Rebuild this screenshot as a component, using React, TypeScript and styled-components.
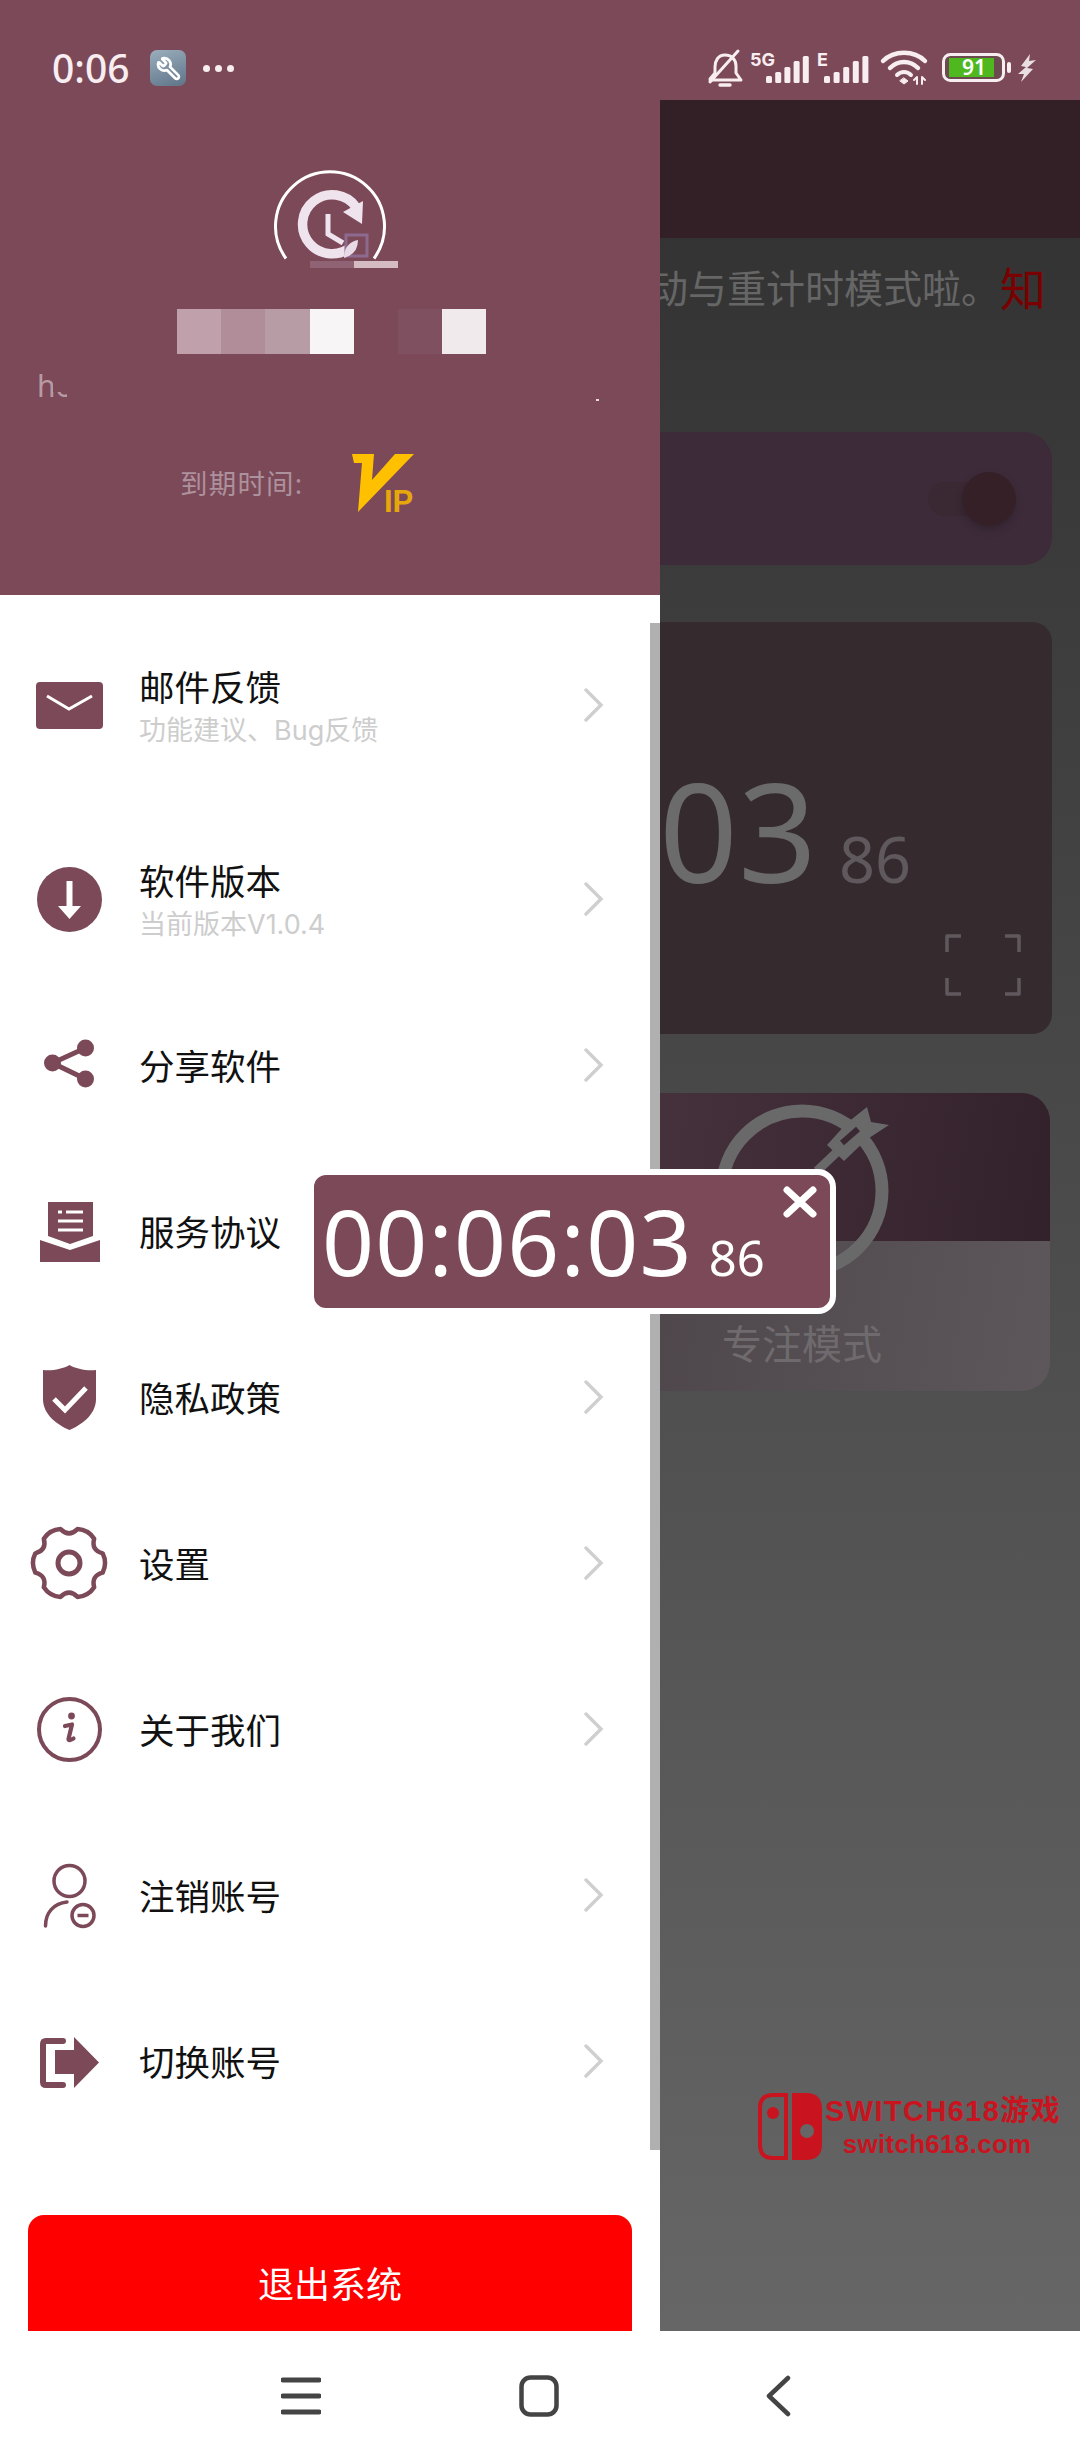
import React from "react";
import styled, { createGlobalStyle } from "styled-components";
import { Wrench } from "lucide-react";

const PLUM = "#7b4958";
const FONT = '"Noto Sans", "Noto Sans CJK SC", sans-serif';

const Global = createGlobalStyle`
  html, body { margin: 0; padding: 0; background: #fff; }
  * { box-sizing: border-box; }
  body { font-family: ${FONT}; }
`;

const Screen = styled.div`
  position: relative;
  width: 1080px;
  height: 2460px;
  display: flex;
  flex-direction: column;
  overflow: hidden;
  background: #fff;
`;

/* ---------- status bar ---------- */
const StatusBar = styled.div`
  height: 100px;
  flex: none;
  background: ${PLUM};
  display: flex;
  align-items: center;
  padding: 36px 44px 0 52px;
  color: #f8edf0;
`;
const Clock = styled.span`
  font-size: 39px;
  line-height: 44px;
  width: 98px;
  font-weight: 500;
`;
const ToolBadge = styled.span`
  width: 36px;
  height: 36px;
  border-radius: 7px;
  background: linear-gradient(160deg, #9aaebd, #5f7488);
  display: flex;
  align-items: center;
  justify-content: center;
  color: #fff;
`;
const FlippedWrench = styled(Wrench)`
  transform: scaleX(-1);
`;
const Dots = styled.span`
  display: flex;
  gap: 5px;
  margin-left: 17px;
`;
const Dot = styled.i`
  width: 7px;
  height: 7px;
  border-radius: 50%;
  background: #f8edf0;
`;
const StatusRight = styled.div`
  margin-left: auto;
  display: flex;
  align-items: center;
`;
const StatusIcon = styled.svg<{ $gap?: number }>`
  display: block;
  flex: none;
  overflow: visible;
  margin-left: ${(p) => p.$gap ?? 0}px;
`;
const SmallMark = styled.text`
  font-family: "Inter", "Noto Sans", sans-serif;
  font-weight: 700;
  font-size: 18px;
  fill: #f8edf0;
`;
const BatteryNum = styled.text`
  font-family: "Noto Sans", sans-serif;
  font-weight: 600;
  font-size: 21px;
  fill: #fff;
`;

/* ---------- body ---------- */
const Body = styled.div`
  flex: none;
  height: 2231px;
  display: flex;
  overflow: hidden;
  position: relative;
`;
const Drawer = styled.aside`
  position: relative;
  z-index: 2;
  width: 660px;
  flex: none;
  background: #fff;
  overflow: hidden;
`;
const Scrollbar = styled.div`
  position: absolute;
  right: 0;
  top: 523px;
  width: 10px;
  height: 1527px;
  background: #b0b0b0;
`;
const DrawerHead = styled.header`
  height: 495px;
  background: ${PLUM};
  padding-top: 70px;
  display: flex;
  flex-direction: column;
`;
const Logo = styled.svg`
  display: block;
  margin-left: 270px;
  flex: none;
`;
const Mosaic = styled.div`
  display: flex;
  margin: 39px 0 0 177px;
  height: 45px;
`;
const MosaicCell = styled.i<{ $c: string }>`
  width: 44.2px;
  background: ${(p) => p.$c};
`;
const MailRow = styled.div`
  position: relative;
  height: 36px;
  margin-top: 14px;
  padding-left: 37px;
`;
const MailFrag = styled.span`
  display: block;
  width: 30px;
  height: 36px;
  overflow: hidden;
  font-size: 30px;
  line-height: 36px;
  color: #b89aa4;
`;
const MailMask = styled.i`
  position: absolute;
  left: 53px;
  top: 0;
  width: 16px;
  height: 24px;
  background: ${PLUM};
`;
const MailTick = styled.i`
  position: absolute;
  left: 596px;
  top: 31px;
  width: 3px;
  height: 2px;
  background: #e7dbe0;
`;
const ExpiryRow = styled.div`
  display: flex;
  align-items: center;
  margin-top: 50px;
  padding-left: 180px;
  gap: 49px;
`;
const ExpiryLabel = styled.span`
  font-size: 27.5px;
  line-height: 40px;
  letter-spacing: 1.2px;
  color: #ad919c;
`;
const VipLogo = styled.svg`
  display: block;
  flex: none;
  overflow: visible;
`;
const VipText = styled.text`
  font-family: "Liberation Sans", sans-serif;
  font-weight: 700;
  font-size: 31px;
  fill: #e6a70c;
`;

const Menu = styled.nav`
  display: flex;
  flex-direction: column;
`;
const Row = styled.div<{ $first?: boolean }>`
  height: ${(p) => (p.$first ? 220.5 : 166)}px;
  flex: none;
  display: flex;
  align-items: center;
  padding-left: 29px;
`;
const IconBox = styled.svg`
  width: 80px;
  height: 80px;
  flex: none;
  display: block;
  overflow: visible;
`;
const RowText = styled.div<{ $shift: boolean }>`
  margin-left: 30px;
  width: 445px;
  display: flex;
  flex-direction: column;
  padding-top: ${(p) => (p.$shift ? 6 : 2)}px;
`;
const RowTitle = styled.div`
  font-size: 35.5px;
  line-height: 46px;
  color: #111;
`;
const RowSub = styled.div`
  font-family: "Inter", "Noto Sans CJK SC", sans-serif;
  font-size: 27px;
  line-height: 42px;
  color: #cdcdcd;
`;
const Chevron = styled.svg`
  flex: none;
  display: block;
`;
const Logout = styled.button`
  display: flex;
  align-items: flex-start;
  justify-content: center;
  width: 604px;
  height: 140px;
  margin: 71px 0 0 28px;
  padding: 46px 0 0;
  border: 0;
  border-radius: 16px;
  background: #fe0000;
  color: #fff;
  font-family: ${FONT};
  font-size: 36px;
  line-height: 48px;
`;

/* ---------- app behind the drawer ---------- */
const Pane = styled.main`
  flex: 1;
  min-width: 0;
  overflow: hidden;
  display: flex;
  flex-direction: column;
  background: linear-gradient(180deg, #303030 0%, #666 100%);
`;
const AppBar = styled.div`
  height: 138px;
  flex: none;
  background: #331f26;
`;
const Notice = styled.div`
  height: 194px;
  flex: none;
  display: flex;
  justify-content: flex-end;
  padding: 1px 34px 0 0;
  white-space: nowrap;
  font-size: 39px;
  line-height: 98px;
  color: #666;
`;
const NoticeLink = styled.span`
  font-size: 46px;
  color: #7a0000;
`;
const ModeCard = styled.section`
  flex: none;
  height: 133px;
  margin: 0 28px 57px -60px;
  border-radius: 0 28px 28px 0;
  background: #3d2b39;
  display: flex;
  align-items: center;
  justify-content: flex-end;
  padding-right: 36px;
`;
const SwitchTrack = styled.div`
  position: relative;
  width: 88px;
  height: 34px;
  border-radius: 17px;
  background: #3a2833;
`;
const SwitchThumb = styled.i`
  position: absolute;
  right: 0;
  top: -10px;
  width: 54px;
  height: 54px;
  border-radius: 50%;
  background: #352027;
  box-shadow: 0 4px 8px rgba(0, 0, 0, 0.18);
`;
const TimerCard = styled.section`
  flex: none;
  height: 412px;
  margin: 0 28px 59px -60px;
  border-radius: 0 20px 20px 0;
  background: #352b2f;
  padding-top: 137px;
  display: flex;
  flex-direction: column;
`;
const TimerRow = styled.div`
  display: flex;
  align-items: baseline;
  justify-content: flex-end;
  gap: 22px;
  padding-right: 141px;
  height: 140px;
`;
const BigDigits = styled.span`
  font-size: 138px;
  line-height: 140px;
  color: #6b6b6b;
`;
const MidDigits = styled.span`
  font-size: 63px;
  line-height: 64px;
  color: #5f595d;
`;
const FullIcon = styled.svg`
  display: block;
  align-self: flex-end;
  margin: 35px 31px 0 0;
`;
const FocusCard = styled.section`
  position: relative;
  flex: none;
  height: 298px;
  margin: 0 30px 0 -106px;
  border-radius: 28px;
  overflow: hidden;
  display: flex;
  flex-direction: column;
`;
const FocusTop = styled.div`
  height: 148px;
  background: linear-gradient(100deg, #4a3641, #32202a);
`;
const FocusBottom = styled.div`
  flex: 1;
  background: linear-gradient(100deg, #4a4246, #5d575b);
  display: flex;
  justify-content: center;
  font-size: 40px;
  line-height: 56px;
  padding-top: 75px;
  color: #6f6a6d;
`;
const TargetArt = styled.svg`
  position: absolute;
  left: 150px;
  top: 0;
  display: block;
`;

/* ---------- overlays ---------- */
const FloatTimer = styled.div`
  position: absolute;
  z-index: 5;
  left: 308px;
  top: 1169px;
  width: 528px;
  height: 145px;
  border: 6px solid #fff;
  border-radius: 18px;
  background: ${PLUM};
  display: flex;
  align-items: baseline;
  padding-left: 8px;
  color: #fff;
`;
const FloatBig = styled.span`
  font-size: 91px;
  line-height: 133px;
  letter-spacing: 1.2px;
`;
const FloatSmall = styled.span`
  font-size: 49px;
  margin-left: 16px;
`;
const FloatClose = styled.svg`
  position: absolute;
  right: 13px;
  top: 11px;
  display: block;
`;
const Watermark = styled.div`
  position: absolute;
  z-index: 1;
  left: 757px;
  top: 1993px;
  display: flex;
  gap: 3px;
  color: #c9141f;
`;
const WatermarkText = styled.div`
  display: flex;
  flex-direction: column;
  align-items: center;
  white-space: nowrap;
`;
const WatermarkTitle = styled.span`
  font-family: "Liberation Sans", "Noto Sans CJK SC", sans-serif;
  font-weight: 700;
  font-size: 29px;
  line-height: 36px;
  letter-spacing: 1.4px;
`;
const WatermarkSub = styled.span`
  font-family: "Liberation Sans", sans-serif;
  font-weight: 700;
  font-size: 26px;
  line-height: 30px;
  margin: 0 12px 0 0;
  letter-spacing: 0.3px;
`;
const NavBar = styled.footer`
  flex: 1;
  background: #fff;
  display: flex;
  align-items: flex-start;
  padding: 46px 0 0 281px;
`;
const NavIcon = styled.svg<{ $gap?: number; $lift?: number }>`
  display: block;
  flex: none;
  margin-left: ${(p) => p.$gap ?? 0}px;
  margin-top: ${(p) => -(p.$lift ?? 0)}px;
`;

/* ---------- drawings ---------- */
const bars = (x0: number, pitch: number, w: number, base: number, hs: number[]) =>
  hs.map((h, i) => (
    <rect key={i} x={x0 + i * pitch} y={base - h} width={w} height={h} rx={1.5} fill="#f8edf0" />
  ));

const gearPath = (() => {
  const pt = (deg: number, r: number) => {
    const a = (deg * Math.PI) / 180;
    return `${(40 + r * Math.cos(a)).toFixed(2)} ${(40 + r * Math.sin(a)).toFixed(2)}`;
  };
  let d = `M${pt(-16, 35)}`;
  for (let k = 0; k < 6; k++) {
    const a = k * 60;
    d += ` Q${pt(a, 38.5)} ${pt(a + 16, 35)}`;
    d += ` Q${pt(a + 30, 25.5)} ${pt(a + 44, 35)}`;
  }
  return d + "Z";
})();

const icons: Record<string, React.ReactNode> = {
  mail: (
    <>
      <rect x="7" y="17" width="67" height="47" rx="4" fill={PLUM} />
      <path d="M18 31 L40 44 L63 31" fill="none" stroke="#fff" strokeWidth="3" />
    </>
  ),
  version: (
    <>
      <circle cx="40.5" cy="40.5" r="32.5" fill={PLUM} />
      <path d="M40.5 22 V48" stroke="#fff" strokeWidth="6" />
      <path d="M29 47 H52 L40.5 60 Z" fill="#fff" />
    </>
  ),
  share: (
    <>
      <path d="M56.5 23 L23.5 38 L56.5 54" fill="none" stroke={PLUM} strokeWidth="5" />
      <circle cx="56.5" cy="23" r="8.5" fill={PLUM} />
      <circle cx="23.5" cy="38" r="8.5" fill={PLUM} />
      <circle cx="56.5" cy="54" r="8.5" fill={PLUM} />
    </>
  ),
  terms: (
    <>
      <path d="M19 11 H64 V45 L41 53 L19 45 Z" fill={PLUM} />
      <path d="M11 49 L41 59 L71 49 V71 H11 Z" fill={PLUM} />
      <path d="M29 21 H33 M37 21 H54 M29 30 H54 M29 39 H54" stroke="#fff" strokeWidth="3" />
    </>
  ),
  shield: (
    <>
      <path
        d="M40.5 8 C47 12 58 14 67 13 V42 C67 58 52 68 40.5 73 C29 68 14 58 14 42 V13 C23 14 34 12 40.5 8 Z"
        fill={PLUM}
      />
      <path d="M25 42 L36 53 L57 31" fill="none" stroke="#fff" strokeWidth="5" />
    </>
  ),
  gear: (
    <>
      <path d={gearPath} fill="none" stroke={PLUM} strokeWidth="4.5" strokeLinejoin="round" />
      <circle cx="40" cy="40" r="11" fill="none" stroke={PLUM} strokeWidth="5" />
    </>
  ),
  info: (
    <>
      <circle cx="40.5" cy="40.5" r="30.5" fill="none" stroke={PLUM} strokeWidth="4" />
      <circle cx="42.5" cy="27" r="3.4" fill={PLUM} />
      <path
        d="M36 37 L43 35.5 L39.5 50 Q39.5 52.5 44.5 49.5"
        fill="none"
        stroke={PLUM}
        strokeWidth="4.2"
        strokeLinecap="round"
        strokeLinejoin="round"
      />
    </>
  ),
  cancel: (
    <>
      <circle cx="40.5" cy="26" r="15.5" fill="none" stroke={PLUM} strokeWidth="3.5" />
      <path d="M16.5 71 C16.5 57 25 48.5 38 47" fill="none" stroke={PLUM} strokeWidth="3.5" strokeLinecap="round" />
      <circle cx="54" cy="60.5" r="11" fill="#fff" stroke={PLUM} strokeWidth="3.5" />
      <path d="M48.5 60.5 H59.5" stroke={PLUM} strokeWidth="3.5" />
    </>
  ),
  switch: (
    <>
      <path
        d="M34 20 H17 Q14 20 14 23 V61 Q14 64 17 64 H34"
        fill="none"
        stroke={PLUM}
        strokeWidth="6"
        strokeLinecap="round"
      />
      <path d="M26 29 H45 V16 L70 41.5 L45 67 V53 H26 Z" fill={PLUM} />
    </>
  ),
};

const rows: { icon: string; title: string; sub?: string }[] = [
  { icon: "mail", title: "邮件反馈", sub: "功能建议、Bug反馈" },
  { icon: "version", title: "软件版本", sub: "当前版本V1.0.4" },
  { icon: "share", title: "分享软件" },
  { icon: "terms", title: "服务协议" },
  { icon: "shield", title: "隐私政策" },
  { icon: "gear", title: "设置" },
  { icon: "info", title: "关于我们" },
  { icon: "cancel", title: "注销账号" },
  { icon: "switch", title: "切换账号" },
];

const mosaic = ["#bfa0ab", "#b08d99", "#b89ca5", "#f8f5f6", PLUM, "#7f5060", "#f0eaed"];

export default function App() {
  return (
    <Screen>
      <Global />
      <StatusBar>
        <Clock>0:06</Clock>
        <ToolBadge>
          <FlippedWrench size={25} strokeWidth={2.6} />
        </ToolBadge>
        <Dots>
          <Dot />
          <Dot />
          <Dot />
        </Dots>
        <StatusRight>
          <StatusIcon width="36" height="38" viewBox="0 0 36 38" fill="none" stroke="#f8edf0" strokeWidth="3" strokeLinecap="round">
            <path d="M3 31 H34 L29 24 V17 C29 10 24 6 18 6 C11 6 8 12 8 18 V24 L3 30" strokeLinejoin="round" />
            <path d="M3 33 L31 2" />
            <path d="M13 36 H23" strokeWidth="3.4" />
          </StatusIcon>
          <StatusIcon $gap={7} width="60" height="34" viewBox="0 0 60 34">
            <SmallMark x="0" y="15">5G</SmallMark>
            {bars(16, 9.2, 6, 32, [7, 11, 16, 22, 27])}
          </StatusIcon>
          <StatusIcon $gap={7} width="51" height="34" viewBox="0 0 51 34">
            <SmallMark x="0" y="15">E</SmallMark>
            {bars(7, 9.6, 6, 32, [7, 11, 16, 22, 27])}
          </StatusIcon>
          <StatusIcon $gap={13} width="46" height="36" viewBox="0 0 46 36" fill="none" stroke="#f8edf0" strokeWidth="4.5" strokeLinecap="round">
            <path d="M2 11 C13 0 33 0 44 11" />
            <path d="M9 18 C17 10 29 10 37 18" />
            <path d="M16 25 C20 21 26 21 30 25" strokeWidth="4" />
            <path d="M19 31 L23 34 L27 31 L23 28 Z" fill="#f8edf0" strokeWidth="1" />
            <path d="M36 27 V34 M33 30 L36 27 M41 27 V34 M41 27 L44 30" strokeWidth="2" />
          </StatusIcon>
          <StatusIcon $gap={15} width="69" height="30" viewBox="0 0 69 30">
            <rect x="1.5" y="1.5" width="60" height="26" rx="7" fill="#6b4a50" stroke="#f8edf0" strokeWidth="3" />
            <rect x="7" y="5" width="45" height="19" fill="#4fb81f" />
            <rect x="65" y="9" width="4" height="11" rx="2" fill="#f8edf0" />
            <BatteryNum x="20" y="22">91</BatteryNum>
          </StatusIcon>
          <StatusIcon $gap={7} width="18" height="28" viewBox="0 0 18 28">
            <path d="M12 0 L3 12 L8 13 L0 20 L6 20 L3 28 L15 15 L9 14 L18 6 L11 7 Z" fill="#e9dfe2" />
          </StatusIcon>
        </StatusRight>
      </StatusBar>

      <Body>
        <Drawer>
          <DrawerHead>
            <Logo width="130" height="100" viewBox="270 170 130 100">
              <path d="M286 258.5 A54.5 54.5 0 1 1 374 258.5" fill="none" stroke="#fff" strokeWidth="3" />
              <path d="M356 207 A29.5 29.5 0 1 0 352 246" fill="none" stroke="#efe3ed" strokeWidth="9.5" />
              <path d="M363 201 L362 224 L343 212 Z" fill="#efe3ed" />
              <path d="M328 214 V234 L343 243" fill="none" stroke="#efe3ed" strokeWidth="5" />
              <rect x="346" y="235" width="21" height="21" fill={PLUM} stroke="#8f6a8f" strokeWidth="3" />
              <path d="M344 258 Q344 243 358 240 Q358 254 344 258 Z" fill="#e8dbe6" />
              <rect x="310" y="261" width="44" height="7" fill="#8f6373" />
              <rect x="354" y="261" width="44" height="7" fill="#d4bcc2" />
            </Logo>
            <Mosaic>
              {mosaic.map((c, i) => (
                <MosaicCell key={i} $c={c} />
              ))}
            </Mosaic>
            <MailRow>
              <MailFrag>hc</MailFrag>
              <MailMask />
              <MailTick />
            </MailRow>
            <ExpiryRow>
              <ExpiryLabel>到期时间:</ExpiryLabel>
              <VipLogo width="66" height="60" viewBox="0 0 66 60">
                <path d="M0 0 H22 L20 26 L43 0 H62 L6 58 L10 9 L2 9 Z" fill="#ffc000" />
                <VipText x="32" y="58">IP</VipText>
              </VipLogo>
            </ExpiryRow>
          </DrawerHead>
          <Menu>
            {rows.map((r, i) => (
              <Row key={r.title} $first={i === 0}>
                <IconBox viewBox="0 0 80 80">{icons[r.icon]}</IconBox>
                <RowText $shift={!!r.sub}>
                  <RowTitle>{r.title}</RowTitle>
                  {r.sub && <RowSub>{r.sub}</RowSub>}
                </RowText>
                <Chevron width="20" height="34" viewBox="0 0 20 34">
                  <path d="M2 2 L17 17 L2 32" fill="none" stroke="#cfcfcf" strokeWidth="3.4" strokeLinecap="round" />
                </Chevron>
              </Row>
            ))}
          </Menu>
          <Logout>退出系统</Logout>
          <Scrollbar />
        </Drawer>

        <Pane>
          <AppBar />
          <Notice>
            <span>振动与重计时模式啦。</span>
            <NoticeLink>知</NoticeLink>
          </Notice>
          <ModeCard>
            <SwitchTrack>
              <SwitchThumb />
            </SwitchTrack>
          </ModeCard>
          <TimerCard>
            <TimerRow>
              <BigDigits>03</BigDigits>
              <MidDigits>86</MidDigits>
            </TimerRow>
            <FullIcon width="76" height="62" viewBox="0 0 76 62" fill="none" stroke="#5f595d" strokeWidth="3.5" strokeLinejoin="round">
              <path d="M16 2 H2 V18 M60 2 H74 V18 M2 44 V60 H16 M74 44 V60 H60" />
            </FullIcon>
          </TimerCard>
          <FocusCard>
            <FocusTop />
            <FocusBottom>专注模式</FocusBottom>
            <TargetArt width="200" height="200" viewBox="0 0 200 200" fill="none" stroke="#696969">
              <circle cx="98" cy="98" r="80" strokeWidth="13" />
              <path d="M113 78 L134 58" strokeWidth="9" />
              <path d="M163 14 L167 29 L185 32 L162 47 L140 68 L123 52 L143 30 Z" fill="#696969" stroke="none" />
              <path d="M138 50 L154 36" stroke="#3a2832" strokeWidth="6" />
            </TargetArt>
          </FocusCard>
        </Pane>

        <Watermark>
          <svg width="65" height="67" viewBox="0 0 65 67">
            <path d="M29 2 H16 Q3 2 3 15 V52 Q3 65 16 65 H29 Z" fill="none" stroke="#c9141f" strokeWidth="4" />
            <circle cx="16" cy="20" r="6" fill="#c9141f" />
            <path d="M35 0 H49 Q65 0 65 16 V51 Q65 67 49 67 H35 Z" fill="#c9141f" />
            <circle cx="50" cy="38" r="7" fill="#666" />
          </svg>
          <WatermarkText>
            <WatermarkTitle>SWITCH618游戏</WatermarkTitle>
            <WatermarkSub>switch618.com</WatermarkSub>
          </WatermarkText>
        </Watermark>
      </Body>

      <FloatTimer>
        <FloatBig>00:06:03</FloatBig>
        <FloatSmall>86</FloatSmall>
        <FloatClose width="34" height="32" viewBox="0 0 34 32">
          <path d="M4 4 L30 28 M30 4 L4 28" stroke="#fff" strokeWidth="7" strokeLinecap="round" />
        </FloatClose>
      </FloatTimer>

      <NavBar>
        <NavIcon width="40" height="38" viewBox="0 0 40 38">
          <path d="M2 3 H38 M2 19 H38 M2 35 H38" stroke="#444" strokeWidth="5" strokeLinecap="round" />
        </NavIcon>
        <NavIcon $gap={198} $lift={2} width="40" height="42" viewBox="0 0 40 42">
          <rect x="2.5" y="2.5" width="35" height="37" rx="9" fill="none" stroke="#444" strokeWidth="4.5" />
        </NavIcon>
        <NavIcon $gap={206} $lift={2} width="26" height="42" viewBox="0 0 26 42">
          <path d="M23 3 L4 21 L23 39" fill="none" stroke="#444" strokeWidth="4.5" strokeLinecap="round" strokeLinejoin="round" />
        </NavIcon>
      </NavBar>
    </Screen>
  );
}
